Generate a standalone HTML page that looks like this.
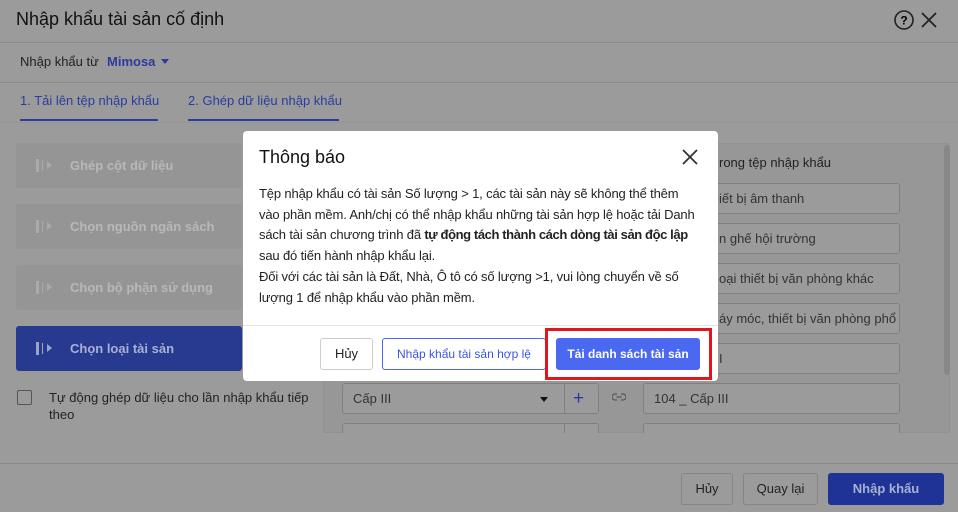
<!DOCTYPE html>
<html><head><meta charset="utf-8"><style>
*{margin:0;padding:0;box-sizing:border-box}
body{width:958px;height:512px;overflow:hidden;background:#9b9b9b;font-family:"Liberation Sans",sans-serif;position:relative;color:#222}
.a{position:absolute}
.line{position:absolute;left:0;width:958px;height:1px;background:#8b8b8b}
.step{position:absolute;left:16px;width:226px;height:45px;background:#959595;border-radius:3px;color:#b8b8b8;font-size:13px;font-weight:bold;line-height:45px;padding-left:54px}
.step i{position:absolute;left:20px;top:16px;width:3px;height:13px;background:#aaa}
.step i:after{content:"";position:absolute;left:6px;top:1px;width:1px;height:11px;background:#aaa}
.step b{position:absolute;left:31px;top:18px;width:0;height:0;border-left:5px solid #aaa;border-top:4px solid transparent;border-bottom:4px solid transparent}
.inp{position:absolute;left:643px;width:257px;height:31px;border:1px solid #808080;border-radius:3px;font-size:13px;line-height:29px;padding-left:10px;color:#333;background:#9b9b9b;overflow:hidden;white-space:nowrap}
.inp span{position:absolute;left:75px}
.btn{position:absolute;height:32px;border:1px solid #ccc;border-radius:3px;font-size:13px;text-align:center;line-height:30px;background:#fff;white-space:nowrap}
</style></head><body>
<div class="a" style="left:16px;top:9px;font-size:18px;color:#111">Nhập khẩu tài sản cố định</div>
<svg class="a" style="left:893px;top:9px" width="50" height="22"><circle cx="11" cy="11" r="9" fill="none" stroke="#222" stroke-width="1.6"/><text x="11" y="15.5" font-size="12" font-weight="bold" text-anchor="middle" font-family="Liberation Sans">?</text><path d="M29 4l14 14M43 4L29 18" stroke="#222" stroke-width="1.8"/></svg>
<div class="line" style="top:42px"></div>
<div class="a" style="left:20px;top:54px;font-size:13px;color:#222">Nhập khẩu từ</div>
<div class="a" style="left:107px;top:54px;font-size:13px;color:#2a3ca0;font-weight:bold">Mimosa</div>
<div class="a" style="left:161px;top:59px;border-left:4px solid transparent;border-right:4px solid transparent;border-top:5px solid #2a3ca0"></div>
<div class="line" style="top:82px"></div>
<div class="a" style="left:20px;top:93px;font-size:13px;color:#2a3ca0">1. Tải lên tệp nhập khẩu</div>
<div class="a" style="left:188px;top:93px;font-size:13px;color:#2a3ca0">2. Ghép dữ liệu nhập khẩu</div>
<div class="a" style="left:20px;top:119px;width:138px;height:2px;background:#2a3ca0"></div>
<div class="a" style="left:188px;top:119px;width:151px;height:2px;background:#2a3ca0"></div>
<div class="line" style="top:122px;background:#959595"></div>
<div class="step" style="top:143px"><i></i><b></b>Ghép cột dữ liệu</div>
<div class="step" style="top:204px"><i></i><b></b>Chọn nguồn ngân sách</div>
<div class="step" style="top:265px"><i></i><b></b>Chọn bộ phận sử dụng</div>
<div class="step" style="top:326px;background:#283a8f;color:#a9b0d4"><i style="background:#9aa3cc"></i><b style="border-left-color:#9aa3cc"></b>Chọn loại tài sản</div>
<div class="a" style="left:17px;top:390px;width:15px;height:15px;border:1px solid #555;border-radius:2px"></div>
<div class="a" style="left:49px;top:389px;font-size:13px;line-height:17px;color:#222;width:270px">Tự động ghép dữ liệu cho lần nhập khẩu tiếp theo</div>
<div class="a" style="left:323px;top:143px;width:627px;height:290px;background:#979797;border:1px solid #919191"></div>
<div class="a" style="left:944px;top:145px;width:6px;height:230px;background:#888;border-radius:3px"></div>
<div class="a" style="left:719px;top:155px;font-size:13px;color:#222">rong tệp nhập khẩu</div>
<div class="inp" style="top:183px"><span>iết bị âm thanh</span></div>
<div class="inp" style="top:223px"><span>n ghế hội trường</span></div>
<div class="inp" style="top:263px"><span>oại thiết bị văn phòng khác</span></div>
<div class="inp" style="top:303px"><span>áy móc, thiết bị văn phòng phổ</span></div>
<div class="inp" style="top:343px"><span>I</span></div>
<div class="inp" style="top:383px">104 _ Cấp III</div>
<div class="inp" style="top:423px;height:20px"></div>
<div class="inp" style="left:342px;top:383px;width:257px">Cấp III</div>
<div class="a" style="left:540px;top:397px;border-left:4px solid transparent;border-right:4px solid transparent;border-top:5px solid #111"></div>
<div class="a" style="left:564px;top:383px;width:1px;height:31px;background:#808080"></div>
<div class="a" style="left:573px;top:388px;font-size:19px;color:#2a3ca0">+</div>
<div class="inp" style="left:342px;top:423px;width:257px;height:20px"></div>
<div class="a" style="left:564px;top:423px;width:1px;height:10px;background:#808080"></div>
<svg class="a" style="left:612px;top:392px" width="14" height="10"><path d="M5 2H3a3 3 0 0 0 0 6h2M9 2h2a3 3 0 0 1 0 6H9M4.5 5h5" fill="none" stroke="#555" stroke-width="1.2"/></svg>
<div class="a" style="left:0;top:433px;width:958px;height:79px;background:#9b9b9b"></div>
<div class="line" style="top:463px"></div>
<div class="btn" style="left:681px;top:473px;width:52px;background:#9b9b9b;border-color:#858585">Hủy</div>
<div class="btn" style="left:743px;top:473px;width:75px;background:#9b9b9b;border-color:#858585">Quay lại</div>
<div class="btn" style="left:828px;top:473px;width:116px;background:#1f3396;border-color:#1f3396;color:#a9b0d4;font-weight:bold">Nhập khẩu</div>

<div class="a" style="left:243px;top:131px;width:475px;height:250px;background:#fff;border-radius:4px">
  <div class="a" style="left:16px;top:16px;font-size:18px;color:#111">Thông báo</div>
  <svg class="a" style="left:439px;top:18px" width="16" height="16"><path d="M1 1l14 14M15 1L1 15" stroke="#333" stroke-width="1.8"/></svg>
  <div class="a" style="left:16px;top:53px;width:455px;font-size:13px;line-height:20.7px;color:#222;letter-spacing:-0.15px">Tệp nhập khẩu có tài sản Số lượng &gt; 1, các tài sản này sẽ không thể thêm<br>vào phần mềm. Anh/chị có thể nhập khẩu những tài sản hợp lệ hoặc tải Danh<br>sách tài sản chương trình đã <b style="letter-spacing:-0.4px">tự động tách thành cách dòng tài sản độc lập</b><br>sau đó tiến hành nhập khẩu lại.<br>Đối với các tài sản là Đất, Nhà, Ô tô có số lượng &gt;1, vui lòng chuyển về số<br>lượng 1 để nhập khẩu vào phần mềm.</div>
  <div class="a" style="left:0;top:194px;width:475px;height:1px;background:#e3e3e3"></div>
  <div class="btn" style="left:77px;top:207px;width:53px;color:#222">Hủy</div>
  <div class="btn" style="left:139px;top:207px;width:164px;border-color:#4a68f0;color:#3a55e0;font-size:12px">Nhập khẩu tài sản hợp lệ</div>
  <div class="btn" style="left:313px;top:207px;width:144px;border-color:#4a68f0;background:#4a68f0;color:#fff;font-weight:bold;font-size:12px">Tải danh sách tài sản</div>
</div>
<div class="a" style="left:545px;top:328px;width:167px;height:52px;border:3px solid #e0161b"></div>
</body></html>
